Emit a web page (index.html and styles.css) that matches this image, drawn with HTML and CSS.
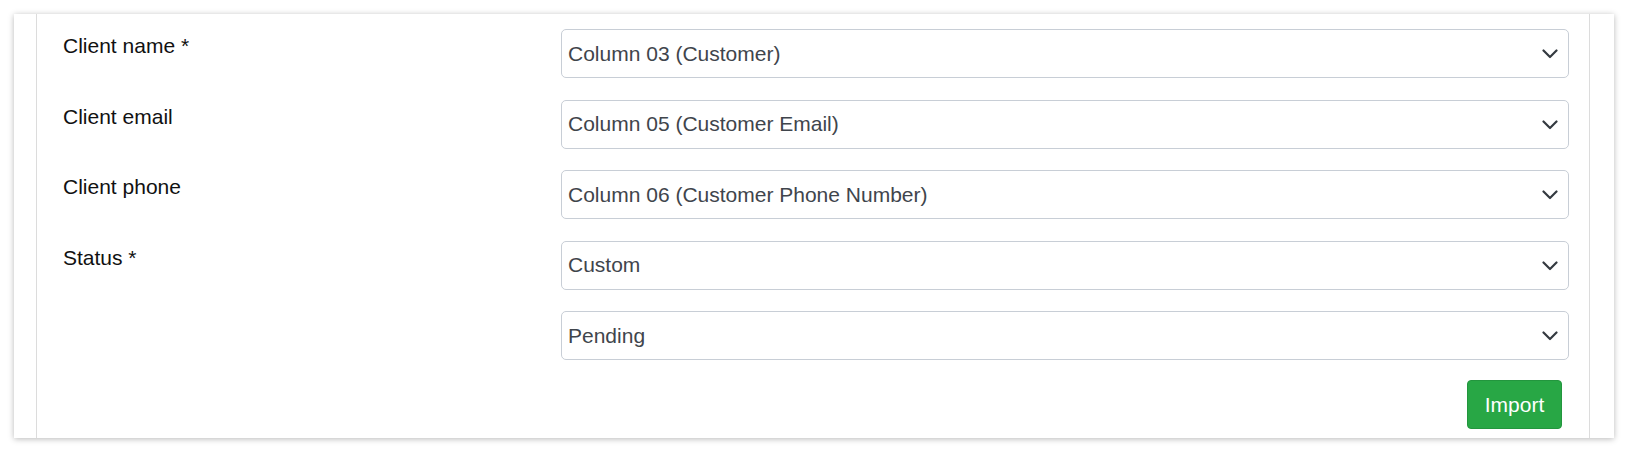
FILE: index.html
```html
<!DOCTYPE html>
<html lang="en">
<head>
<meta charset="utf-8">
<title>Import mapping</title>
<link rel="stylesheet" href="styles.css">
</head>
<body>
<div class="card">
  <div class="panel">
    <div class="row">
      <div class="label">Client name *</div>
      <div class="select"><span>Column 03 (Customer)</span><svg class="chev" width="16" height="10" viewBox="0 0 16 10"><path d="M1.5 1.5 L8 8 L14.5 1.5" /></svg></div>
    </div>
    <div class="row">
      <div class="label">Client email</div>
      <div class="select"><span>Column 05 (Customer Email)</span><svg class="chev" width="16" height="10" viewBox="0 0 16 10"><path d="M1.5 1.5 L8 8 L14.5 1.5" /></svg></div>
    </div>
    <div class="row">
      <div class="label">Client phone</div>
      <div class="select"><span>Column 06 (Customer Phone Number)</span><svg class="chev" width="16" height="10" viewBox="0 0 16 10"><path d="M1.5 1.5 L8 8 L14.5 1.5" /></svg></div>
    </div>
    <div class="row">
      <div class="label">Status *</div>
      <div class="select"><span>Custom</span><svg class="chev" width="16" height="10" viewBox="0 0 16 10"><path d="M1.5 1.5 L8 8 L14.5 1.5" /></svg></div>
    </div>
    <div class="row">
      <div class="label"></div>
      <div class="select"><span>Pending</span><svg class="chev" width="16" height="10" viewBox="0 0 16 10"><path d="M1.5 1.5 L8 8 L14.5 1.5" /></svg></div>
    </div>
    <div class="actions">
      <button class="btn">Import</button>
    </div>
  </div>
</div>
</body>
</html>
```
FILE: styles.css
```css
html, body {
  margin: 0;
  padding: 0;
  background: #ffffff;
}
body {
  font-family: "Liberation Sans", Arial, sans-serif;
  font-size: 21px;
}
.card {
  margin: 14px;
  width: 1600px;
  height: 424px;
  box-sizing: border-box;
  background: #ffffff;
  box-shadow: 0 1px 6px rgba(0, 0, 0, 0.28);
  padding: 0 24px 0 22px;
  display: flex;
}
.panel {
  flex: 1;
  border-left: 1px solid #dcdcdc;
  border-right: 1px solid #dcdcdc;
  padding: 15px 20px 9px 26px;
  display: flex;
  flex-direction: column;
}
.row {
  display: flex;
  margin-bottom: 21.5px;
}
.row:nth-child(5) {
  margin-bottom: 20px;
}
.label {
  width: 498px;
  flex: none;
  color: #111;
  line-height: 24px;
  padding-top: 5px;
}
.select {
  flex: 1;
  height: 49px;
  box-sizing: border-box;
  border: 1px solid #c8ced6;
  border-radius: 5px;
  display: flex;
  align-items: center;
  justify-content: space-between;
  padding: 0 10px 0 6px;
  color: #3f454c;
}
.chev {
  display: block;
  margin-top: 1px;
}
.chev path {
  fill: none;
  stroke: #343a40;
  stroke-width: 2.2;
  stroke-linecap: round;
  stroke-linejoin: round;
}
.actions {
  display: flex;
  justify-content: flex-end;
  padding-right: 7px;
}
.btn {
  font-family: "Liberation Sans", Arial, sans-serif;
  font-size: 21px;
  color: #ffffff;
  background: #28a745;
  border: 1px solid #23963e;
  border-radius: 4px;
  height: 49px;
  width: 95px;
  padding: 0;
}
```
